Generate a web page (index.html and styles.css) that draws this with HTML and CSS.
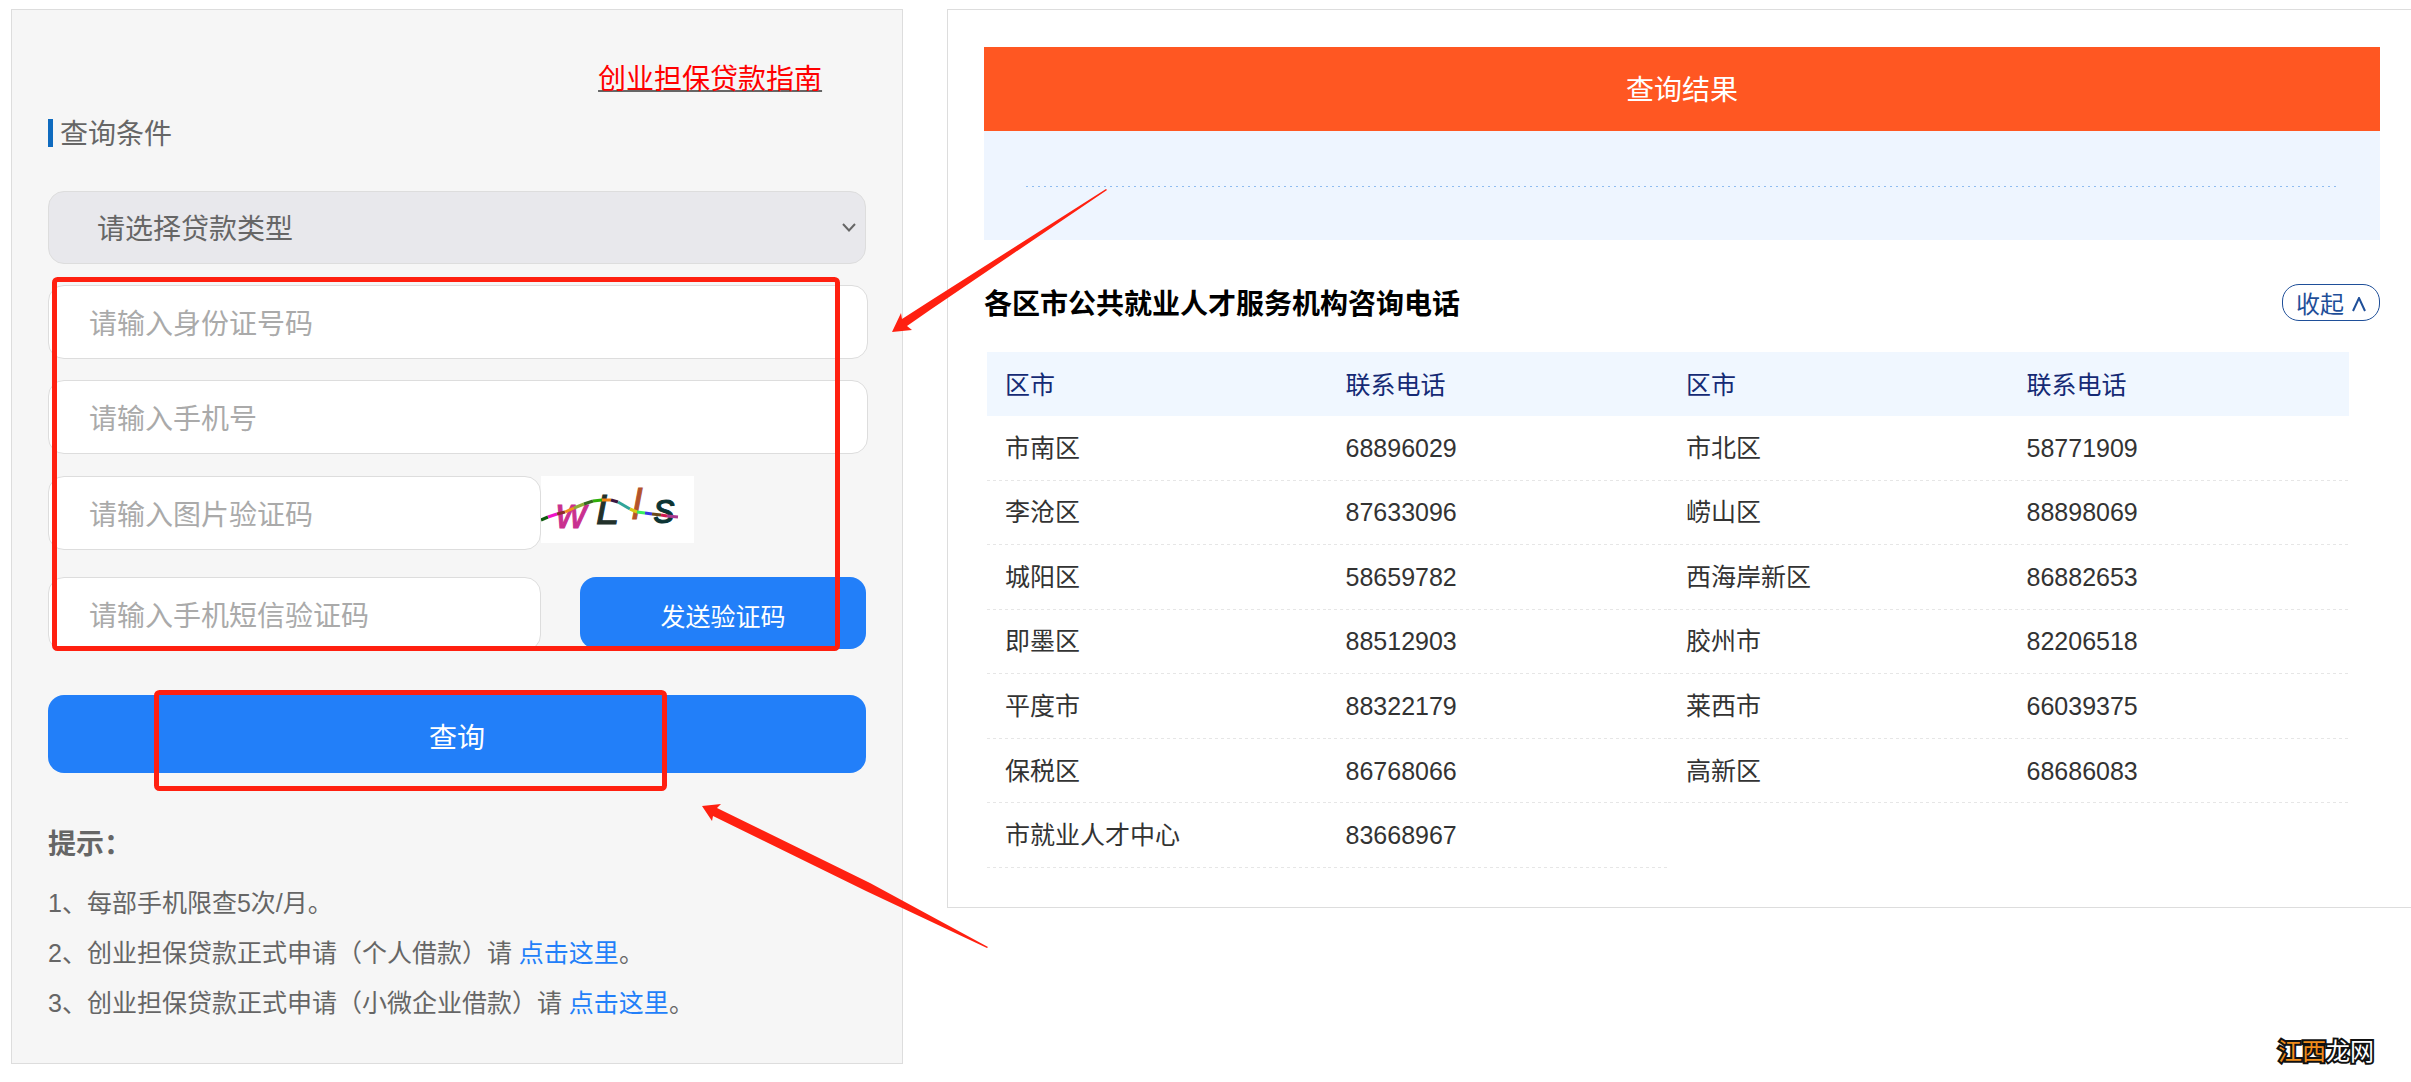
FILE: index.html
```html
<!DOCTYPE html>
<html lang="zh-CN">
<head>
<meta charset="utf-8">
<meta name="viewport" content="width=device-width, initial-scale=1">
<title>创业担保贷款查询</title>
<link rel="stylesheet" href="styles.css">
</head>
<body>
<main class="page">
  <section class="query">
    <p class="guide"><a class="guide-link" href="#guide">创业担保贷款指南</a></p>
    <h2 class="query-title">查询条件</h2>
    <form class="form">
      <div class="select-wrap">
        <select class="select" aria-label="贷款类型">
          <option>请选择贷款类型</option>
        </select>
        <svg class="chevron" viewBox="0 0 14 9" aria-hidden="true"><path d="M1 1l6 6.500 6-6.500"/></svg>
      </div>
      <input class="input" type="text" placeholder="请输入身份证号码" aria-label="身份证号码">
      <input class="input" type="tel" placeholder="请输入手机号" aria-label="手机号">
      <div class="row row-captcha">
        <input class="input input-code" type="text" placeholder="请输入图片验证码" aria-label="图片验证码">
        <svg class="captcha" viewBox="0 0 153 67" role="img" aria-label="图片验证码">
          <rect width="153" height="67" fill="#fff"/>
          <g class="captcha-text">
            <text x="15" y="52" fill="#c9308f" stroke="#c9308f">w</text>
            <text x="55" y="48" fill="#22312a" stroke="#22312a">L</text>
            <text x="91" y="43" fill="#b4532a" stroke="#b4532a">l</text>
            <text x="113" y="47" fill="#0c3434" stroke="#0c3434">s</text>
          </g>
          <g class="captcha-line">
            <path stroke="#0d5a0d" d="M0 44L7 41"/>
            <path stroke="#f012c8" d="M7 41L16 38"/>
            <path stroke="#8a2f2a" d="M16 38L24 36"/>
            <path stroke="#f0921e" d="M24 36L33 32"/>
            <path stroke="#8fae35" d="M33 32L43 28"/>
            <path stroke="#356a20" d="M43 28L52 25"/>
            <path stroke="#2fae08" d="M52 25L61 24"/>
            <path stroke="#f08010" d="M61 24L70 24"/>
            <path stroke="#3a1540" d="M70 24L77 26"/>
            <path stroke="#30a59a" d="M77 26L89 33"/>
            <path stroke="#d8c814" d="M89 33L96 36"/>
            <path stroke="#38ee60" d="M96 36L104 37"/>
            <path stroke="#3838e0" d="M104 37L111 38"/>
            <path stroke="#6a4818" d="M111 38L120 39"/>
            <path stroke="#d01850" d="M120 39L126 40"/>
            <path stroke="#a83890" d="M126 40L137 41"/>
          </g>
        </svg>
      </div>
      <div class="row row-sms">
        <input class="input input-code" type="text" placeholder="请输入手机短信验证码" aria-label="手机短信验证码">
        <button class="btn btn-send" type="button">发送验证码</button>
      </div>
      <button class="btn btn-query" type="button">查询</button>
    </form>
    <h3 class="tips-title">提示：</h3>
    <div class="tips">
      <p>1、每部手机限查5次/月。</p>
      <p>2、创业担保贷款正式申请（个人借款）请 <a href="#personal">点击这里</a>。</p>
      <p>3、创业担保贷款正式申请（小微企业借款）请 <a href="#company">点击这里</a>。</p>
    </div>
  </section>

  <section class="result">
    <h2 class="result-title">查询结果</h2>
    <div class="result-body"><hr class="result-line"></div>
    <div class="phones-head">
      <h3 class="phones-title">各区市公共就业人才服务机构咨询电话</h3>
      <button class="toggle" type="button">收起<svg class="caret" viewBox="0 0 14 15" aria-hidden="true"><path d="M1 14L7 1l6 13"/></svg></button>
    </div>
    <table class="phones">
      <thead>
        <tr><th>区市</th><th>联系电话</th><th>区市</th><th>联系电话</th></tr>
      </thead>
      <tbody>
        <tr><td>市南区</td><td>68896029</td><td>市北区</td><td>58771909</td></tr>
        <tr><td>李沧区</td><td>87633096</td><td>崂山区</td><td>88898069</td></tr>
        <tr><td>城阳区</td><td>58659782</td><td>西海岸新区</td><td>86882653</td></tr>
        <tr><td>即墨区</td><td>88512903</td><td>胶州市</td><td>82206518</td></tr>
        <tr><td>平度市</td><td>88322179</td><td>莱西市</td><td>66039375</td></tr>
        <tr><td>保税区</td><td>86768066</td><td>高新区</td><td>68686083</td></tr>
        <tr><td>市就业人才中心</td><td>83668967</td></tr>
      </tbody>
    </table>
  </section>
</main>

<svg class="marks" width="1120" height="960" viewBox="0 0 1120 960" aria-hidden="true">
  <rect class="mark-box" x="54.500" y="279.500" width="783" height="369" rx="3"/>
  <rect class="mark-box" x="156.500" y="692.500" width="508" height="96" rx="3"/>
  <path class="mark-arrow" d="M892 332L901 313 902 319 930 301 1106 189 1107 190 930 310 907 326 912 330Z"/>
  <path class="mark-arrow" d="M702 806L721 804 717 808 870 883 988 947 987 948 866 891 713 816 712 821Z"/>
</svg>
<div class="watermark"><span class="watermark-accent">江西</span>龙网</div>
</body>
</html>
```

FILE: styles.css
```css
* {
  box-sizing: border-box;
}

body {
  margin: 0;
  position: relative;
  min-height: 100vh;
  background: #fff;
  color: #666;
  font-family: "Liberation Sans", Arial, "Noto Sans CJK SC", sans-serif;
  font-size: 25px;
}

h2,
h3,
p {
  margin: 0;
  font-weight: normal;
}

button,
input,
select {
  font-family: inherit;
}

.page {
  display: flex;
  align-items: flex-start;
  gap: 44px;
  padding: 9px 0 18px 11px;
}

/* query form */
.query {
  flex: none;
  width: 37vw;
  padding: 49px 36px 35px;
  background: #f6f6f6;
  border: 1px solid #ddd;
}

.guide {
  padding-right: 44px;
  font-size: 28px;
  line-height: 42px;
  text-align: right;
}

.guide-link {
  color: #f00;
  text-decoration: underline 2px #666;
}

.query-title {
  margin-top: 13px;
  padding-left: 12px;
  background: linear-gradient(#0f6bbf, #0f6bbf) 0 5px / 5px 28px no-repeat;
  font-size: 28px;
  line-height: 42px;
}

.form {
  display: flex;
  flex-direction: column;
  gap: 21px;
  margin-top: 35px;
}

.select-wrap {
  display: grid;
  align-items: center;
}

.select-wrap > * {
  grid-area: 1 / 1;
}

.select {
  appearance: none;
  width: 100%;
  height: 73px;
  padding: 4px 48px 0;
  border: 1px solid #ddd;
  border-radius: 16px;
  background: #e8e8ec;
  color: #666;
  font-size: 28px;
}

.chevron {
  justify-self: end;
  width: 14px;
  height: 9px;
  margin-right: 10px;
  fill: none;
  stroke: #666;
  stroke-width: 2;
  pointer-events: none;
}

.input {
  height: 74px;
  margin-right: -2px;
  padding: 5px 40px 0;
  border: 1px solid #ddd;
  border-radius: 16px;
  background: #fff;
  color: #666;
  font-size: 28px;
}

.input::placeholder {
  color: #aaa;
  opacity: 1;
}

.row {
  display: flex;
  align-items: flex-start;
}

.row-captcha {
  margin-top: 1px;
}

.row-sms {
  margin-top: 6px;
}

.input-code {
  width: calc(60% + 2px);
  margin-right: 0;
}

.captcha {
  width: 153px;
  height: 67px;
}

.captcha-text {
  font-family: "Liberation Sans", Arial, sans-serif;
  font-size: 42px;
  font-style: italic;
}

.captcha-line {
  fill: none;
  stroke-width: 3;
}

.btn {
  padding: 4px 0 0;
  border: 0;
  border-radius: 16px;
  background: #227ff9;
  color: #fff;
}

.btn-send {
  width: 35%;
  height: 72px;
  margin-left: auto;
  font-size: 25px;
}

.btn-query {
  height: 78px;
  margin-top: 23px;
  font-size: 28px;
}

.tips-title {
  margin-top: 51px;
  font-size: 28px;
  font-weight: bold;
  line-height: 42px;
}

.tips {
  margin-top: 12px;
  line-height: 50px;
}

.tips a {
  color: #227ff9;
  text-decoration: none;
}

/* result panel */
.result {
  flex: 1;
  min-width: 0;
  padding: 37px 31px 39px 36px;
  border: 1px solid #ddd;
  border-right: 0;
}

.result-title {
  padding-top: 4px;
  background: #ff5722;
  color: #fff;
  font-size: 28px;
  line-height: 80px;
  text-align: center;
}

.result-body {
  padding: 55px 42px 53px;
  background: #eef5ff;
}

.result-line {
  height: 1px;
  margin: 0;
  border: 0;
  background: repeating-linear-gradient(90deg, #8fbcf0 0 2px, transparent 2px 6px);
}

.phones-head {
  display: flex;
  align-items: center;
  justify-content: space-between;
  margin-top: 44px;
}

.phones-title {
  padding-top: 4px;
  color: #000;
  font-size: 28px;
  font-weight: bold;
  line-height: 33px;
}

.toggle {
  display: flex;
  align-items: center;
  gap: 8px;
  height: 37px;
  padding: 0 13px;
  border: 1px solid #1f4f99;
  border-radius: 17px;
  background: #fff;
  color: #1f4f99;
  font-size: 24px;
}

.caret {
  width: 14px;
  height: 15px;
  margin-top: 4px;
  fill: none;
  stroke: currentColor;
  stroke-width: 2;
}

.phones {
  width: calc(100% - 34px);
  height: 516px;
  margin: 31px 31px 0 3px;
  border-spacing: 0;
  table-layout: fixed;
  color: #333;
  font-size: 25px;
  line-height: 36px;
  text-align: left;
}

.phones th,
.phones td {
  height: 64px;
  padding: 2px 18px 0;
}

.phones th {
  background: #f0f7ff;
  color: #152a75;
  font-weight: normal;
}

.phones td {
  padding: 0 18px 1px;
  background: repeating-linear-gradient(90deg, #e6e6e6 0 3px, transparent 3px 6px) 0 100% / 100% 1px no-repeat;
}

/* red markers drawn over the page */
.marks {
  position: absolute;
  top: 0;
  left: 0;
  pointer-events: none;
}

.mark-box {
  fill: none;
  stroke: #ff2010;
  stroke-width: 5;
}

.mark-arrow {
  fill: #ff2010;
}

.watermark {
  position: absolute;
  right: 37px;
  bottom: 12px;
  color: #fff;
  font-size: 24px;
  line-height: 36px;
  -webkit-text-stroke: 4px #111;
  paint-order: stroke fill;
}

.watermark-accent {
  color: #f08c1a;
}
```
